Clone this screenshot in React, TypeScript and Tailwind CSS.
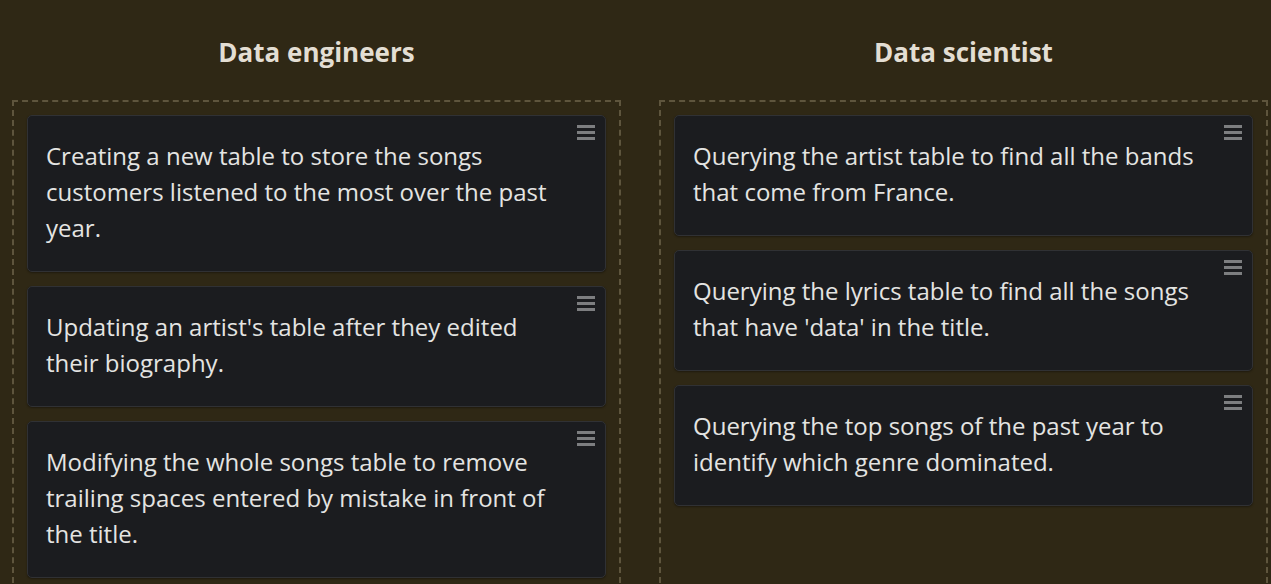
const columns = [
  {
    title: "Data engineers",
    cards: [
      "Creating a new table to store the songs customers listened to the most over the past year.",
      "Updating an artist's table after they edited their biography.",
      "Modifying the whole songs table to remove trailing spaces entered by mistake in front of the title.",
    ],
  },
  {
    title: "Data scientist",
    cards: [
      "Querying the artist table to find all the bands that come from France.",
      "Querying the lyrics table to find all the songs that have 'data' in the title.",
      "Querying the top songs of the past year to identify which genre dominated.",
    ],
  },
];

function DragHandle() {
  return (
    <svg
      className="absolute right-[10px] top-[9px]"
      width="18"
      height="15"
      viewBox="0 0 18 15"
      fill="#7d7e80"
    >
      <rect x="0" y="0" width="18" height="3" />
      <rect x="0" y="6" width="18" height="3" />
      <rect x="0" y="12" width="18" height="3" />
    </svg>
  );
}

function Card({ text }: { text: string }) {
  return (
    <div className="relative rounded-[5px] border border-[#303134] bg-[#1b1c1f] pb-[24px] pl-[18px] pr-[42px] pt-[22px] shadow-[0_1px_2px_rgba(0,0,0,0.35)]">
      <DragHandle />
      <p className="pb-[1px] text-[24px] leading-[36px] text-[#e4e4e2]">{text}</p>
    </div>
  );
}

export default function App() {
  return (
    <div
      className="h-[584px] overflow-hidden bg-[#2f2815] pl-[12px] pr-[3px]"
      style={{ fontFamily: "'Open Sans', 'Liberation Sans', sans-serif" }}
    >
      <div className="grid h-full grid-cols-2 gap-x-[38px]">
        {columns.map((col) => (
          <div key={col.title} className="flex flex-col">
            <h2 className="pb-[32px] pt-[36px] text-center text-[26px] font-bold leading-[32px] text-[#e3ded3]">
              {col.title}
            </h2>
            <div className="flex flex-1 flex-col gap-[14px] border-2 border-dashed border-[#5e553d] p-[13px]">
              {col.cards.map((c) => (
                <Card key={c} text={c} />
              ))}
            </div>
          </div>
        ))}
      </div>
    </div>
  );
}
